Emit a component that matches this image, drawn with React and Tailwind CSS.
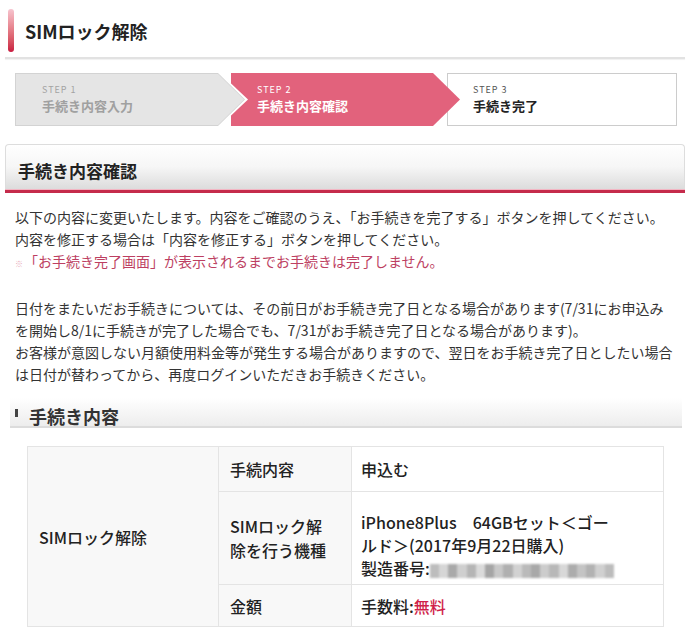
import React from 'react'

// SIMロック解除 - 手続き内容確認画面

const font = { fontFamily: '"Noto Sans CJK JP", "Noto Sans", sans-serif' }

const StepLabel = ({ step, label, stepClass, labelClass }) => (
  <div className="flex flex-col justify-center h-full">
    <div className={`text-[9px] leading-[12px] tracking-[1px] ${stepClass}`}>{step}</div>
    <div className={`mt-px text-[13px] leading-[18px] font-bold ${labelClass}`}>{label}</div>
  </div>
)

const Steps = () => (
  <div className="flex h-[53px] pl-[15px] mt-[14px]">
    {/* step 1 */}
    <div className="relative z-20 w-[233px] h-full bg-white [clip-path:polygon(0_0,calc(100%-28px)_0,100%_50%,calc(100%-28px)_100%,0_100%)]">
      <div className="w-[230px] h-full bg-[#d3d3d3] p-px [clip-path:polygon(0_0,calc(100%-27px)_0,100%_50%,calc(100%-27px)_100%,0_100%)]">
        <div className="h-full bg-[#e5e5e5] pl-[26px] [clip-path:polygon(0_0,calc(100%-26px)_0,100%_50%,calc(100%-26px)_100%,0_100%)]">
          <StepLabel step="STEP 1" label="手続き内容入力" stepClass="text-[#a3a3a3]" labelClass="text-[#a0a0a0]" />
        </div>
      </div>
    </div>
    {/* step 2 */}
    <div className="relative z-10 ml-[-17px] w-[229px] h-full bg-[#e2627c] pl-[26px] [clip-path:polygon(0_0,calc(100%-27px)_0,100%_50%,calc(100%-27px)_100%,0_100%)]">
      <StepLabel step="STEP 2" label="手続き内容確認" stepClass="text-white" labelClass="text-white" />
    </div>
    {/* step 3 */}
    <div className="relative ml-[-13px] w-[230px] h-full bg-white border border-[#cccccc] pl-[25px]">
      <StepLabel step="STEP 3" label="手続き完了" stepClass="text-[#555555]" labelClass="text-[#222222]" />
    </div>
  </div>
)

const Blurred = () => {
  const blocks = ['#bdbdbd', '#d6d6d6', '#a9a9a9', '#cfcfcf', '#b5b5b5', '#dadada', '#a5a5a5', '#c8c8c8', '#b0b0b0', '#d2d2d2', '#bababa', '#a8a8a8', '#cccccc', '#b8b8b8', '#d8d8d8', '#acacac', '#c4c4c4', '#b2b2b2', '#d0d0d0', '#bcbcbc']
  return (
    <span className="inline-flex align-middle h-[14px] w-[184px] blur-[1.2px] bg-[#dddddd]">
      {blocks.map((c, i) => (
        <span key={i} className="flex-1 h-full" style={{ backgroundColor: c }} />
      ))}
    </span>
  )
}

export default function App() {
  return (
    <div className="w-[700px] h-[632px] bg-white overflow-hidden text-[#333333]" style={font}>
      {/* ページタイトル */}
      <div className="flex items-center pt-[9px] pl-[8px]">
        <div className="w-[6px] h-[43px] rounded-[3px] bg-gradient-to-b from-[#f6c4cf] to-[#c8173f]" />
        <h1 className="ml-[11px] text-[18px] font-bold text-[#222222] leading-[24px]">SIMロック解除</h1>
      </div>
      <div className="mt-[5px] ml-[5px] w-[680px] h-[2px] bg-[#e2e2e2] shadow-[0_1px_1px_rgba(0,0,0,0.06)]" />

      <Steps />

      {/* セクション見出し */}
      <div className="mt-[18px] ml-[5px] w-[680px] rounded-t-[4px] border border-b-0 border-[#dddddd] bg-gradient-to-b from-white via-[#f6f6f6] to-[#dcdcdc]">
        <div className="pl-[12px] pt-[14px] pb-[6px] text-[17px] leading-[24px] font-bold text-[#222222]">手続き内容確認</div>
      </div>
      <div className="ml-[5px] w-[680px] h-px bg-[#f2b6c3]" />
      <div className="ml-[5px] w-[680px] h-[3px] bg-[#c52b4b]" />

      {/* 説明文 */}
      <div className="mt-[13px] pl-[15px] text-[14px] leading-[22px] whitespace-nowrap">
        <p>以下の内容に変更いたします。内容をご確認のうえ、「お手続きを完了する」ボタンを押してください。</p>
        <p>内容を修正する場合は「内容を修正する」ボタンを押してください。</p>
        <p className="text-[#bd3f62]"><span className="text-[8px] text-[#e8a9b8] mr-px">※</span>「お手続き完了画面」が表示されるまでお手続きは完了しません。</p>
      </div>
      <div className="mt-[22px] pl-[15px] text-[14px] leading-[22px] whitespace-nowrap">
        <p>日付をまたいだお手続きについては、その前日がお手続き完了日となる場合があります(7/31にお申込み</p>
        <p>を開始し8/1に手続きが完了した場合でも、7/31がお手続き完了日となる場合があります)。</p>
        <p>お客様が意図しない月額使用料金等が発生する場合がありますので、翌日をお手続き完了日としたい場合</p>
        <p>は日付が替わってから、再度ログインいただきお手続きください。</p>
      </div>

      {/* 小見出し */}
      <div className="mt-[13px] ml-[10px] w-[672px] pt-[9px] pb-[1px] flex items-start border-b-2 border-[#dcdcdc] bg-gradient-to-b from-white to-[#ededed]">
        <div className="ml-[5px] mt-[2px] w-[3px] h-[8px] bg-[#444444]" />
        <h2 className="ml-[11px] text-[18px] leading-[18px] font-bold text-[#333333]">手続き内容</h2>
      </div>

      {/* 手続き内容テーブル */}
      <table className="mt-[18px] ml-[27px] w-[636px] border-collapse text-[16px] font-medium text-[#222222] table-fixed">
        <colgroup>
          <col className="w-[191px]" />
          <col className="w-[133px]" />
          <col className="w-[312px]" />
        </colgroup>
        <tbody>
          <tr className="h-[45px]">
            <td rowSpan={3} className="bg-[#f8f8f8] border border-[#e4e4e4] pl-[11px] align-middle">SIMロック解除</td>
            <td className="bg-[#f8f8f8] border border-[#e4e4e4] pl-[11px] align-middle">手続内容</td>
            <td className="border border-[#e4e4e4] pl-[9px] align-middle">申込む</td>
          </tr>
          <tr className="h-[93px]">
            <td className="bg-[#f8f8f8] border border-[#e4e4e4] pl-[11px] align-middle leading-[24px]">SIMロック解<br />除を行う機種</td>
            <td className="border border-[#e4e4e4] pl-[9px] pt-[19px] align-top leading-[23px]">
              iPhone8Plus　64GBセット＜ゴー<br />
              ルド＞(2017年9月22日購入)<br />
              製造番号:<Blurred />
            </td>
          </tr>
          <tr className="h-[42px]">
            <td className="bg-[#f8f8f8] border border-[#e4e4e4] pl-[11px] align-middle">金額</td>
            <td className="border border-[#e4e4e4] pl-[9px] align-middle">手数料:<span className="text-[#d01f4a]">無料</span></td>
          </tr>
        </tbody>
      </table>
    </div>
  )
}
